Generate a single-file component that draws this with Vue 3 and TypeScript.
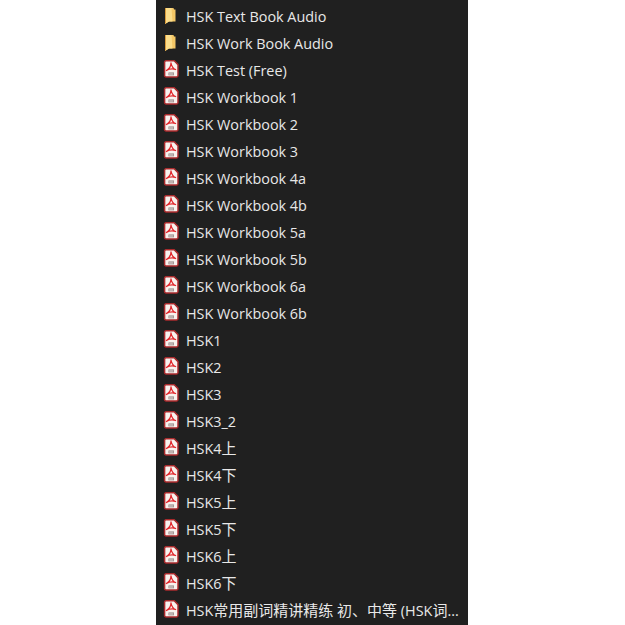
<script setup lang="ts">
interface Part { text: string; cjk: boolean }
interface Row { name: string; kind: 'folder' | 'pdf'; parts: Part[] }

function split(name: string): Part[] {
  return name
    .split(/([\u3000-\u9fff]+)/)
    .filter((t) => t.length > 0)
    .map((text) => ({ text, cjk: /[\u3000-\u9fff]/.test(text) }))
}

const folders = ['HSK Text Book Audio', 'HSK Work Book Audio']
const pdfs = ['HSK Test (Free)','HSK Workbook 1','HSK Workbook 2','HSK Workbook 3','HSK Workbook 4a','HSK Workbook 4b','HSK Workbook 5a','HSK Workbook 5b','HSK Workbook 6a','HSK Workbook 6b','HSK1','HSK2','HSK3','HSK3_2','HSK4上','HSK4下','HSK5上','HSK5下','HSK6上','HSK6下','HSK常用副词精讲精练 初、中等 (HSK词...']
const rows: Row[] = [
  ...folders.map((name): Row => ({ name, kind: 'folder', parts: split(name) })),
  ...pdfs.map((name): Row => ({ name, kind: 'pdf', parts: split(name) })),
]
</script>

<template>
  <div class="page">
    <ul class="list">
      <li v-for="r in rows" :key="r.name" class="row">
        <svg v-if="r.kind === 'folder'" class="icon" viewBox="0 -1.500 16 18" width="16" height="18">
          <path d="M2 0.500h8.500L11 2h1.500v12H6l-4 2.500z" fill="#f4c766"/>
          <path d="M2 0.500h6.500L9.500 14H6l-4 2.500z" fill="#fbdd8b"/>
          <path d="M2 0.500h1V16l-1 .5z" fill="#d99a3a"/>
        </svg>
        <svg v-else class="icon" viewBox="0 0 16 18" width="16" height="18">
          <path d="M3 .8h8.200L15 4.600V15.600a1.400 1.400 0 0 1-1.400 1.400H3a1.400 1.400 0 0 1-1.400-1.400V2.200A1.400 1.400 0 0 1 3 .8z" fill="#f8f2ee" stroke="#a92a2c" stroke-width="1.500" stroke-linejoin="round"/>
          <path d="M8 3C8 6 6 9 3.400 10.500 6 9 9.500 8.500 12.600 9.500 10 8.500 8.500 6 8 3z" fill="none" stroke="#e2262b" stroke-width="1.300" stroke-linejoin="round"/>
          <rect x="5.500" y="12.500" width="5.500" height="2.800" fill="#8a7c7a"/>
          <path d="M6 13.300h4.500v.5H6zM6 14.300h4.500v.5H6z" fill="#efe8e6"/>
        </svg>
        <span class="name"><span v-for="(p, i) in r.parts" :key="i" :class="{ cjk: p.cjk }">{{ p.text }}</span></span>
      </li>
    </ul>
  </div>
</template>

<style>
html, body { margin: 0; background: #fff; }
</style>

<style scoped>
.page {
  width: 625px;
  height: 625px;
  overflow: hidden;
  background: #ffffff;
  display: flex;
  justify-content: center;
  padding-right: 1px;
  box-sizing: border-box;
}
.list {
  width: 312px;
  height: 625px;
  box-sizing: border-box;
  margin: 0;
  padding: 3px 0 0;
  list-style: none;
  background: #202020;
  overflow: hidden;
}
.row {
  height: 27px;
  display: flex;
  align-items: center;
  padding-left: 7px;
  gap: 7px;
}
.icon { flex: none; margin-bottom: 4px; }
.name {
  font-family: "Open Sans", "Noto Sans CJK SC", sans-serif;
  font-size: 14.4px;
  line-height: 20px;
  color: #e8e8e8;
  white-space: nowrap;
}
.cjk {
  font-family: "Noto Sans CJK SC", sans-serif;
  font-size: 15px;
  line-height: 20px;
}
</style>
